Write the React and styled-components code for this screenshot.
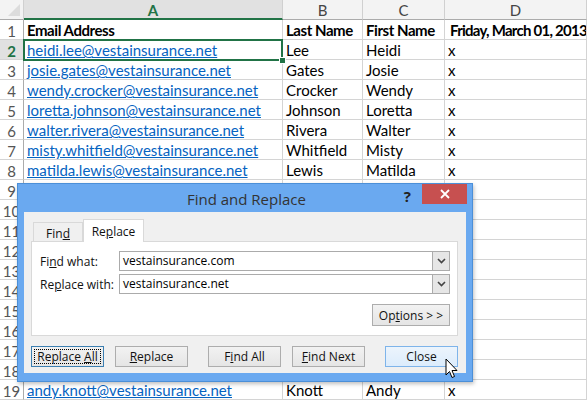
import styled, { createGlobalStyle } from "styled-components";

const GlobalStyle = createGlobalStyle`
  html, body { margin: 0; padding: 0; background: #fff; }
  body { width: 587px; height: 400px; overflow: hidden; }
`;

const rows = [
  ["heidi.lee@vestainsurance.net", "Lee", "Heidi"],
  ["josie.gates@vestainsurance.net", "Gates", "Josie"],
  ["wendy.crocker@vestainsurance.net", "Crocker", "Wendy"],
  ["loretta.johnson@vestainsurance.net", "Johnson", "Loretta"],
  ["walter.rivera@vestainsurance.net", "Rivera", "Walter"],
  ["misty.whitfield@vestainsurance.net", "Whitfield", "Misty"],
  ["matilda.lewis@vestainsurance.net", "Lewis", "Matilda"],
];

const Page = styled.div`
  position: relative;
  width: 587px;
  height: 400px;
  overflow: hidden;
  font-family: Lato, "Liberation Sans", sans-serif;
`;

const Sheet = styled.div`
  display: grid;
  grid-template-columns: 24px 259px 80px 82px 142px;
  grid-auto-rows: 20px;
`;

const Corner = styled.div`
  background: #f3f3f3;
  border-right: 1px solid #d0d0d0;
  border-bottom: 1px solid #ababab;
  position: relative;
  &::after {
    content: "";
    position: absolute;
    right: 3px;
    bottom: 3px;
    border-left: 12px solid transparent;
    border-bottom: 12px solid #dcdcdc;
  }
`;

const ColHead = styled.div`
  background: ${(p) => (p.$active ? "#e1e1e1" : "#f3f3f3")};
  color: ${(p) => (p.$active ? "#217346" : "#444")};
  font-weight: ${(p) => (p.$active ? 700 : 400)};
  border-right: 1px solid #d0d0d0;
  border-bottom: ${(p) => (p.$active ? "2px solid #217346" : "1px solid #ababab")};
  font-size: 15px;
  display: flex;
  align-items: center;
  justify-content: center;
  padding-top: 1px;
`;

const RowHead = styled.div`
  background: ${(p) => (p.$active ? "#e1e1e1" : "#fff")};
  color: ${(p) => (p.$active ? "#217346" : "#555")};
  font-weight: ${(p) => (p.$active ? 700 : 400)};
  border-right: 1px solid #ababab;
  border-bottom: 1px solid #d4d4d4;
  font-size: 15px;
  display: flex;
  align-items: center;
  justify-content: center;
  padding-top: 2px;
`;

const Cell = styled.div`
  position: relative;
  border-right: 1px solid #d4d4d4;
  border-bottom: 1px solid #d4d4d4;
  padding: 2px 0 0 ${(p) => p.$pad || 3}px;
  font-size: 15px;
  line-height: 17px;
  white-space: nowrap;
  overflow: hidden;
  color: #000;
  font-weight: ${(p) => (p.$bold ? 700 : 400)};
  letter-spacing: ${(p) => (p.$bold ? p.$ls || "-0.45px" : "0")};
`;

const Link = styled.span`
  color: #0563c1;
  text-decoration: underline;
`;

const Selection = styled.div`
  position: absolute;
  left: 23px;
  top: 39px;
  width: 256px;
  height: 18px;
  border: 2px solid #217346;
  pointer-events: none;
  &::after {
    content: "";
    position: absolute;
    right: -5px;
    bottom: -5px;
    width: 5px;
    height: 5px;
    background: #217346;
    border: 1px solid #fff;
  }
`;

const Dialog = styled.div`
  position: absolute;
  left: 17px;
  top: 183px;
  width: 454px;
  height: 197px;
  background: #6aa9f0;
  border: 1px solid #4b8fd8;
  box-shadow: 1px 2px 4px rgba(0, 0, 0, 0.25);
  display: flex;
  flex-direction: column;
  font-family: "Open Sans", "Noto Sans", sans-serif;
`;

const TitleBar = styled.div`
  height: 29px;
  display: flex;
  align-items: flex-start;
`;

const Title = styled.div`
  flex: 1;
  text-align: center;
  font-family: "Open Sans", sans-serif;
  font-size: 15px;
  color: #333;
  padding-top: 5px;
  padding-left: 71px;
`;

const Help = styled.div`
  font-weight: 700;
  font-size: 15px;
  color: #222;
  padding-top: 2px;
  margin-right: 11px;
`;

const CloseX = styled.div`
  width: 45px;
  height: 20px;
  background: #c75050;
  color: #fff;
  display: flex;
  align-items: center;
  justify-content: center;
  margin-right: 5px;
`;

const Body = styled.div`
  flex: 1;
  margin: 0 6px 8px 6px;
  background: #f0f0f0;
  padding: 6px 8px 6px 7px;
  display: flex;
  flex-direction: column;
`;

const Tabs = styled.div`
  display: flex;
  align-items: flex-end;
  height: 23px;
  padding-left: 2px;
`;

const Tab = styled.div`
  height: ${(p) => (p.$on ? "23px" : "19px")};
  width: ${(p) => p.$w}px;
  box-sizing: border-box;
  border: 1px solid #d9d9d9;
  border-bottom: none;
  background: ${(p) => (p.$on ? "#fff" : "#f0f0f0")};
  font-size: 12px;
  color: #111;
  display: flex;
  align-items: center;
  justify-content: center;
  padding-top: ${(p) => (p.$on ? "0" : "2px")};
  margin-bottom: ${(p) => (p.$on ? "-1px" : "0")};
  position: relative;
  z-index: 1;
`;

const Panel = styled.div`
  height: 95px;
  box-sizing: border-box;
  border: 1px solid #d9d9d9;
  background: #fff;
  padding: 9px 7px 9px 8px;
  display: flex;
  flex-direction: column;
  gap: 3px;
`;

const Field = styled.div`
  display: flex;
  align-items: center;
  height: 20px;
`;

const Label = styled.div`
  width: 79px;
  font-size: 12px;
  color: #111;
`;

const Combo = styled.div`
  flex: 1;
  height: 20px;
  box-sizing: border-box;
  border: 1px solid #ababab;
  background: #fff;
  display: flex;
  align-items: stretch;
`;

const ComboText = styled.div`
  flex: 1;
  font-size: 12px;
  color: #000;
  padding-left: 3px;
  line-height: 18px;
`;

const ComboArrow = styled.div`
  width: 16px;
  background: #e6e6e6;
  border-left: 1px solid #ababab;
  display: flex;
  align-items: center;
  justify-content: center;
`;

const OptionsRow = styled.div`
  display: flex;
  justify-content: flex-end;
  margin-top: 7px;
`;

const Button = styled.div`
  height: ${(p) => p.$h || 21}px;
  width: ${(p) => p.$w || 73}px;
  box-sizing: border-box;
  border: 1px solid ${(p) => (p.$hot ? "#7eb4ea" : p.$focus ? "#3c7fb1" : "#adadad")};
  background: ${(p) =>
    p.$hot
      ? "linear-gradient(#ecf4fc, #dcecfc)"
      : "linear-gradient(#f2f2f2, #e5e5e5)"};
  font-size: 12px;
  color: #111;
  display: flex;
  align-items: center;
  justify-content: center;
  position: relative;
  ${(p) =>
    p.$focus &&
    `&::after {
      content: "";
      position: absolute;
      inset: 2px;
      border: 1px dotted #000;
    }`}
`;

const ButtonRow = styled.div`
  display: flex;
  margin-top: 10px;
`;

const Gap = styled.div`
  width: ${(p) => p.$w}px;
`;

const Cursor = styled.svg`
  position: absolute;
  left: 445px;
  top: 358px;
`;

const Arrow = () => (
  <svg width="9" height="6" viewBox="0 0 9 6">
    <path d="M1 1 L4.5 4.5 L8 1" fill="none" stroke="#444" strokeWidth="1.6" />
  </svg>
);

export default function App() {
  const emptyRows = [];
  for (let r = 9; r <= 18; r++) emptyRows.push(r);
  return (
    <Page>
      <GlobalStyle />
      <Sheet>
        <Corner />
        <ColHead $active>A</ColHead>
        <ColHead>B</ColHead>
        <ColHead>C</ColHead>
        <ColHead>D</ColHead>

        <RowHead>1</RowHead>
        <Cell $bold>Email Address</Cell>
        <Cell $bold>Last Name</Cell>
        <Cell $bold>First Name</Cell>
        <Cell $bold $pad={5} $ls="-0.75px">
          Friday, March 01, 2013
        </Cell>

        {rows.map((r, i) => (
          <Row key={i} n={i + 2} email={r[0]} last={r[1]} first={r[2]} />
        ))}
        {emptyRows.map((n) => (
          <EmptyRow key={n} n={n} />
        ))}
        <Row n={19} email="andy.knott@vestainsurance.net" last="Knott" first="Andy" />
      </Sheet>
      <Selection />

      <Dialog>
        <TitleBar>
          <Title>Find and Replace</Title>
          <Help>?</Help>
          <CloseX>
            <svg width="10" height="10" viewBox="0 0 10 10">
              <path d="M1 1 L9 9 M9 1 L1 9" stroke="#fff" strokeWidth="1.8" />
            </svg>
          </CloseX>
        </TitleBar>
        <Body>
          <Tabs>
            <Tab $w={50}>
              <span>
                Fin<u>d</u>
              </span>
            </Tab>
            <Tab $w={61} $on>
              <span>
                Re<u>p</u>lace
              </span>
            </Tab>
          </Tabs>
          <Panel>
            <Field>
              <Label>
                Fi<u>n</u>d what:
              </Label>
              <Combo>
                <ComboText>vestainsurance.com</ComboText>
                <ComboArrow>
                  <Arrow />
                </ComboArrow>
              </Combo>
            </Field>
            <Field>
              <Label>
                Re<u>p</u>lace with:
              </Label>
              <Combo>
                <ComboText>vestainsurance.net</ComboText>
                <ComboArrow>
                  <Arrow />
                </ComboArrow>
              </Combo>
            </Field>
            <OptionsRow>
              <Button $w={78} $h={22}>
                <span>
                  Op<u>t</u>ions &gt; &gt;
                </span>
              </Button>
            </OptionsRow>
          </Panel>
          <ButtonRow>
            <Button $focus>
              <span>
                Replace <u>A</u>ll
              </span>
            </Button>
            <Gap $w={11} />
            <Button>
              <span>
                <u>R</u>eplace
              </span>
            </Button>
            <Gap $w={20} />
            <Button>
              <span>
                F<u>i</u>nd All
              </span>
            </Button>
            <Gap $w={11} />
            <Button>
              <span>
                <u>F</u>ind Next
              </span>
            </Button>
            <Gap $w={20} />
            <Button $hot>Close</Button>
          </ButtonRow>
        </Body>
      </Dialog>

      <Cursor width="14" height="22" viewBox="0 0 14 22">
        <path
          d="M1 1 L1 17 L4.5 13.5 L7 19.5 L9.5 18.5 L7 12.5 L12 12.5 Z"
          fill="#fff"
          stroke="#000"
          strokeWidth="1"
          strokeLinejoin="miter"
        />
      </Cursor>
    </Page>
  );
}

function Row({ n, email, last, first }) {
  return (
    <>
      <RowHead $active={n === 2}>{n}</RowHead>
      <Cell>
        <Link>{email}</Link>
      </Cell>
      <Cell>{last}</Cell>
      <Cell>{first}</Cell>
      <Cell>x</Cell>
    </>
  );
}

function EmptyRow({ n }) {
  return (
    <>
      <RowHead>{n}</RowHead>
      <Cell />
      <Cell />
      <Cell />
      <Cell />
    </>
  );
}
